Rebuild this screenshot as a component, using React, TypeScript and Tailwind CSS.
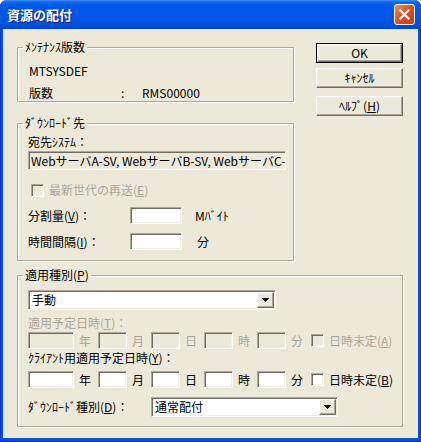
import React from 'react';

const sunken =
  'border border-t-[#ACA899] border-l-[#ACA899] border-b-white border-r-white shadow-[inset_1px_1px_0_#716F64,inset_-1px_-1px_0_#F1EFE2]';
const raised =
  'border border-t-white border-l-white border-b-[#716F64] border-r-[#716F64] shadow-[inset_-1px_-1px_0_#ACA899,inset_1px_1px_0_#F1EFE2] bg-[#ECE9D8]';

const Arrow = () => (
  <svg width="7" height="4" viewBox="0 0 7 4" shapeRendering="crispEdges" aria-hidden="true">
    <rect x="0" y="0" width="7" height="1" fill="#000" />
    <rect x="1" y="1" width="5" height="1" fill="#000" />
    <rect x="2" y="2" width="3" height="1" fill="#000" />
    <rect x="3" y="3" width="1" height="1" fill="#000" />
  </svg>
);

function Group({ label, className, children }: { label: React.ReactNode; className: string; children: React.ReactNode }) {
  return (
    <div className={`relative border border-[#ACA899] shadow-[inset_1px_1px_0_#fff,1px_1px_0_#fff] ${className}`}>
      <span className="absolute -top-[8px] left-[5px] bg-[#ECE9D8] px-[2px] leading-[14px]">{label}</span>
      {children}
    </div>
  );
}

function Edit({ w, disabled, className = '' }: { w: string; disabled?: boolean; className?: string }) {
  return <div className={`${sunken} h-[17px] ${w} ${disabled ? 'bg-[#ECE9D8]' : 'bg-white'} ${className}`} />;
}

function Check({ disabled }: { disabled?: boolean }) {
  return <div className={`${sunken} w-[13px] h-[13px] shrink-0 ${disabled ? 'bg-[#ECE9D8]' : 'bg-white'}`} />;
}

function Combo({ value, w }: { value: string; w: string }) {
  return (
    <div className={`${sunken} bg-white flex items-center h-[20px] ${w}`}>
      <span className="flex-1 pl-[3px] leading-[14px]">{value}</span>
      <div className={`${raised} w-[17px] h-[16px] mr-[1px] flex items-center justify-center`}>
        <Arrow />
      </div>
    </div>
  );
}

function Btn({ children, isDefault, className = '' }: { children: React.ReactNode; isDefault?: boolean; className?: string }) {
  if (isDefault) {
    return (
      <div className={`border border-black w-[87px] h-[20px] flex ${className}`}>
        <div className={`${raised} flex-1 flex items-center justify-center leading-[14px]`}>{children}</div>
      </div>
    );
  }
  return (
    <div className={`${raised} w-[87px] h-[20px] flex items-center justify-center leading-[14px] ${className}`}>
      {children}
    </div>
  );
}

const dateParts = ['年', '月', '日', '時', '分'];

function DateRow({ disabled, mnemonic }: { disabled?: boolean; mnemonic: string }) {
  const tone = disabled ? 'text-[#ACA899]' : 'text-black';
  return (
    <div className={`flex items-center ${tone}`}>
      {dateParts.map((part, i) => (
        <React.Fragment key={part}>
          <Edit w={i === 0 ? 'w-[46px]' : 'w-[29px]'} disabled={disabled} className={i === 0 ? '' : 'ml-[7px]'} />
          <span className="ml-[5px] w-[12px] leading-[14px]">{part}</span>
        </React.Fragment>
      ))}
      <div className="ml-[8px]">
        <Check disabled={disabled} />
      </div>
      <span className="ml-[5px] leading-[14px]">
        日時未定(<u>{mnemonic}</u>)
      </span>
    </div>
  );
}

export default function App() {
  return (
    <div className="w-[421px] h-[442px] flex flex-col bg-[#0055E5] rounded-t-[7px] overflow-hidden shadow-[inset_1px_0_0_#0831D9,inset_-1px_0_0_#0831D9,inset_0_-1px_0_#001EA0] font-['Noto_Sans_CJK_JP',sans-serif] text-[12px] text-black">
      {/* Title bar */}
      <div className="h-[29px] shrink-0 flex items-center justify-between pl-[7px] pr-[6px] bg-[linear-gradient(to_bottom,#3C8EF8_0px,#1468F0_2px,#0058E8_5px,#0055E5_18px,#0050DA_25px,#0044C4_29px)]">
        <span className="text-white font-bold text-[13px] leading-[16px] [text-shadow:1px_1px_0_#0A1E8C]">資源の配付</span>
        <div className="w-[21px] h-[21px] rounded-[3px] border border-white bg-[linear-gradient(135deg,#F08A64,#D9502A_50%,#C23A14)] flex items-center justify-center">
          <svg width="11" height="11" viewBox="0 0 11 11" aria-hidden="true">
            <path d="M1.5 1.5L9.5 9.5M9.5 1.5L1.5 9.5" stroke="#fff" strokeWidth="2.2" strokeLinecap="square" />
          </svg>
        </div>
      </div>

      {/* Client area */}
      <div className="flex-1 mx-[3px] mb-[4px] bg-[#ECE9D8] pt-[14px] pl-[14px]">
        <div className="flex">
          <div className="w-[277px] pt-[4px]">
            <Group label="ﾒﾝﾃﾅﾝｽ版数" className="h-[55px] pt-[16px] pl-[11px]">
              <div className="leading-[14px]">MTSYSDEF</div>
              <div className="flex mt-[8px] leading-[14px]">
                <span className="w-[92px]">版数</span>
                <span className="w-[21px]">:</span>
                <span>RMS00000</span>
              </div>
            </Group>

            <Group label="ﾀﾞｳﾝﾛｰﾄﾞ先" className="mt-[21px] h-[138px] pt-[11px] pl-[10px]">
              <div className="leading-[14px]">宛先ｼｽﾃﾑ：</div>
              <div className={`${sunken} mt-[2px] h-[19px] w-[258px] bg-[#ECE9D8] overflow-hidden whitespace-nowrap flex items-center pl-[2px] leading-[14px]`}>
                WebサーバA-SV, WebサーバB-SV, WebサーバC-SV
              </div>
              <div className="mt-[13px] ml-[3px] flex items-center text-[#ACA899]">
                <Check disabled />
                <span className="ml-[5px] leading-[14px]">
                  最新世代の再送(<u>E</u>)
                </span>
              </div>
              <div className="mt-[10px] flex items-center">
                <span className="w-[102px] leading-[14px]">
                  分割量(<u>V</u>)：
                </span>
                <Edit w="w-[52px]" />
                <span className="ml-[13px] leading-[14px]">Mﾊﾞｲﾄ</span>
              </div>
              <div className="mt-[9px] flex items-center">
                <span className="w-[102px] leading-[14px]">
                  時間間隔(<u>I</u>)：
                </span>
                <Edit w="w-[52px]" />
                <span className="ml-[15px] leading-[14px]">分</span>
              </div>
            </Group>
          </div>

          <div className="ml-[22px] flex flex-col">
            <Btn isDefault>OK</Btn>
            <Btn className="mt-[5px]">ｷｬﾝｾﾙ</Btn>
            <Btn className="mt-[8px]">
              ﾍﾙﾌﾟ(<u>H</u>)
            </Btn>
          </div>
        </div>

        <Group
          label={
            <>
              適用種別(<u>P</u>)
            </>
          }
          className="mt-[14px] w-[386px] h-[152px] pt-[14px] pl-[10px]"
        >
          <Combo value="手動" w="w-[248px]" />
          <div className="mt-[6px] leading-[14px] text-[#ACA899]">
            適用予定日時(<u>T</u>)：
          </div>
          <div className="mt-[2px]">
            <DateRow disabled mnemonic="A" />
          </div>
          <div className="mt-[2px] leading-[14px]">
            ｸﾗｲｱﾝﾄ用適用予定日時(<u>Y</u>)：
          </div>
          <div className="mt-[6px]">
            <DateRow mnemonic="B" />
          </div>
          <div className="mt-[9px] flex items-center">
            <span className="w-[123px] leading-[14px]">
              ﾀﾞｳﾝﾛｰﾄﾞ種別(<u>D</u>)：
            </span>
            <Combo value="通常配付" w="w-[187px]" />
          </div>
        </Group>
      </div>
    </div>
  );
}
